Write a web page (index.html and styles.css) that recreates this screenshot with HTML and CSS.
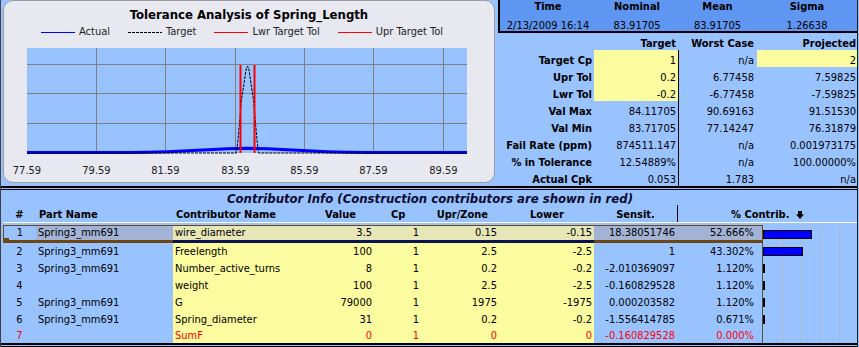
FILE: index.html
```html
<!DOCTYPE html>
<html>
<head>
  <title>Tolerance Analysis of Spring_Length</title>
  <meta charset="UTF-8">
  <link rel="stylesheet" href="styles.css">
</head>
<body>
  <div class="sheet">
    <div class="top">
      <div class="chart-panel">
        <div class="chart-title">Tolerance Analysis of Spring_Length</div>
        <div class="legend">
          <span class="legend-item"><span class="swatch swatch-actual"></span>Actual</span>
          <span class="legend-item"><span class="swatch swatch-target"></span>Target</span>
          <span class="legend-item"><span class="swatch swatch-tol"></span>Lwr Target Tol</span>
          <span class="legend-item"><span class="swatch swatch-tol"></span>Upr Target Tol</span>
        </div>
        <svg class="plot" width="490" height="143" viewBox="0 0 490 143">
          <rect x="23" y="9" width="440" height="105" fill="#99c3ff"/>
          <g stroke="#808080" stroke-width="1" fill="none">
            <path d="M23 25.5H463M23 54.5H463M23 84.5H463"/>
            <path d="M92.5 9V114M161.5 9V114M231.5 9V114M300.5 9V114M369.5 9V114M439.5 9V114"/>
          </g>
          <polyline fill="none" stroke="#0000ff" stroke-width="3" stroke-linejoin="round"
            points="23,113.5 103.5,113.5 123.5,113.4 143.5,113.2 163.5,112.7 183.5,111.8 203.5,110.7 223.5,109.7 243.5,109.3 263.5,109.7 283.5,110.7 303.5,111.8 323.5,112.7 343.5,113.2 363.5,113.4 383.5,113.5 463,113.5"/>
          <polyline fill="none" stroke="#000" stroke-width="1" stroke-dasharray="3 1"
            points="23,114 232.5,114 234,101 235.5,84 237.5,61 240.5,41 242,31 243.5,27 245,31 246.5,41 249.5,61 251.5,84 253,101 254.5,114 463,114"/>
          <path d="M236.5 26V114M250.5 26V114" stroke="#ff0000" stroke-width="2"/>
          <g class="axis-labels" text-anchor="middle">
            <text x="23" y="135">77.59</text>
            <text x="92.5" y="135">79.59</text>
            <text x="161.5" y="135">81.59</text>
            <text x="231.5" y="135">83.59</text>
            <text x="300.5" y="135">85.59</text>
            <text x="369.5" y="135">87.59</text>
            <text x="439.5" y="135">89.59</text>
          </g>
        </svg>
      </div>

      <div class="stats">
        <div class="summary">
          <div class="summary-head">Time</div>
          <div class="summary-head">Nominal</div>
          <div class="summary-head">Mean</div>
          <div class="summary-head">Sigma</div>
          <div class="summary-val">2/13/2009 16:14</div>
          <div class="summary-val">83.91705</div>
          <div class="summary-val">83.91705</div>
          <div class="summary-val">1.26638</div>
        </div>
        <div class="stat-grid">
          <div class="stat-label"></div>
          <div class="stat-head col-t">Target</div>
          <div class="stat-head col-w">Worst Case</div>
          <div class="stat-head col-p">Projected</div>

          <div class="stat-label">Target Cp</div>
          <div class="col-t input">1</div>
          <div class="col-w line">n/a</div>
          <div class="col-p input">2</div>

          <div class="stat-label">Upr Tol</div>
          <div class="col-t input">0.2</div>
          <div class="col-w line">6.77458</div>
          <div class="col-p">7.59825</div>

          <div class="stat-label">Lwr Tol</div>
          <div class="col-t input">-0.2</div>
          <div class="col-w line">-6.77458</div>
          <div class="col-p">-7.59825</div>

          <div class="stat-label">Val Max</div>
          <div class="col-t">84.11705</div>
          <div class="col-w line">90.69163</div>
          <div class="col-p">91.51530</div>

          <div class="stat-label">Val Min</div>
          <div class="col-t">83.71705</div>
          <div class="col-w line">77.14247</div>
          <div class="col-p">76.31879</div>

          <div class="stat-label">Fail Rate (ppm)</div>
          <div class="col-t">874511.147</div>
          <div class="col-w line">n/a</div>
          <div class="col-p">0.001973175</div>

          <div class="stat-label">% in Tolerance</div>
          <div class="col-t">12.54889%</div>
          <div class="col-w line">n/a</div>
          <div class="col-p">100.00000%</div>

          <div class="stat-label">Actual Cpk</div>
          <div class="col-t">0.053</div>
          <div class="col-w line">1.783</div>
          <div class="col-p">n/a</div>
        </div>
      </div>
    </div>

    <div class="rule"></div>

    <div class="contrib">
      <div class="contrib-title">Contributor Info (Construction contributors are shown in red)</div>
      <div class="contrib-head">
        <div class="h-num">#</div>
        <div class="h-part">Part Name</div>
        <div class="h-name">Contributor Name</div>
        <div class="h-val">Value</div>
        <div class="h-cp">Cp</div>
        <div class="h-upr"><span>Upr/Zone</span></div>
        <div class="h-low">Lower</div>
        <div class="h-sens">Sensit.</div>
        <div class="h-pct">% Contrib.
          <svg class="sort-arrow" width="8" height="8" viewBox="0 0 8 8"><path d="M2 0H6V3.5H8L4 8L0 3.5H2Z" fill="#000"/></svg>
        </div>
      </div>
      <div class="contrib-line"></div>

      <div class="crow sel">
        <div class="c-num">1</div>
        <div class="c-part">Spring3_mm691</div>
        <div class="c-name">wire_diameter</div>
        <div class="c-val">3.5</div>
        <div class="c-cp">1</div>
        <div class="c-upr">0.15</div>
        <div class="c-low">-0.15</div>
        <div class="c-sens">18.38051746</div>
        <div class="c-pct">52.666%</div>
        <div class="c-bar"><div class="bar" style="width: 49px"></div></div>
        <span class="handle"></span>
      </div>
      <div class="crow">
        <div class="c-num">2</div>
        <div class="c-part">Spring3_mm691</div>
        <div class="c-name">Freelength</div>
        <div class="c-val">100</div>
        <div class="c-cp">1</div>
        <div class="c-upr">2.5</div>
        <div class="c-low">-2.5</div>
        <div class="c-sens">1</div>
        <div class="c-pct">43.302%</div>
        <div class="c-bar"><div class="bar" style="width: 40px"></div></div>
      </div>
      <div class="crow">
        <div class="c-num">3</div>
        <div class="c-part">Spring3_mm691</div>
        <div class="c-name">Number_active_turns</div>
        <div class="c-val">8</div>
        <div class="c-cp">1</div>
        <div class="c-upr">0.2</div>
        <div class="c-low">-0.2</div>
        <div class="c-sens">-2.010369097</div>
        <div class="c-pct">1.120%</div>
        <div class="c-bar"><div class="bar" style="width: 2px"></div></div>
      </div>
      <div class="crow">
        <div class="c-num">4</div>
        <div class="c-part"></div>
        <div class="c-name">weight</div>
        <div class="c-val">100</div>
        <div class="c-cp">1</div>
        <div class="c-upr">2.5</div>
        <div class="c-low">-2.5</div>
        <div class="c-sens">-0.160829528</div>
        <div class="c-pct">1.120%</div>
        <div class="c-bar"><div class="bar" style="width: 2px"></div></div>
      </div>
      <div class="crow">
        <div class="c-num">5</div>
        <div class="c-part">Spring3_mm691</div>
        <div class="c-name">G</div>
        <div class="c-val">79000</div>
        <div class="c-cp">1</div>
        <div class="c-upr">1975</div>
        <div class="c-low">-1975</div>
        <div class="c-sens">0.000203582</div>
        <div class="c-pct">1.120%</div>
        <div class="c-bar"><div class="bar" style="width: 2px"></div></div>
      </div>
      <div class="crow">
        <div class="c-num">6</div>
        <div class="c-part">Spring3_mm691</div>
        <div class="c-name">Spring_diameter</div>
        <div class="c-val">31</div>
        <div class="c-cp">1</div>
        <div class="c-upr">0.2</div>
        <div class="c-low">-0.2</div>
        <div class="c-sens">-1.556414785</div>
        <div class="c-pct">0.671%</div>
        <div class="c-bar"><div class="bar" style="width: 2px"></div></div>
      </div>
      <div class="crow construction last">
        <div class="c-num">7</div>
        <div class="c-part"></div>
        <div class="c-name">SumF</div>
        <div class="c-val">0</div>
        <div class="c-cp">1</div>
        <div class="c-upr">0</div>
        <div class="c-low">0</div>
        <div class="c-sens">-0.160829528</div>
        <div class="c-pct">0.000%</div>
        <div class="c-bar"></div>
      </div>
    </div>

    <div class="rule"></div>
  </div>
</body>
</html>
```

FILE: styles.css
```css
* {
  margin: 0;
  padding: 0;
  box-sizing: border-box;
}

body {
  background: #99c3ff;
  font-family: "DejaVu Sans Condensed", "DejaVu Sans", sans-serif;
  font-size: 11px;
  color: #000;
}

.sheet {
  width: 858px;
  height: 347px;
  border-left: 1px solid #404040;
  border-right: 1px solid #1a1a1a;
  overflow: hidden;
}

/* top half: chart + summary numbers */

.top {
  display: flex;
  height: 186px;
}

.chart-panel {
  margin-left: 2px;
  width: 492px;
  height: 183px;
  background: #e8e8f0;
  border: 1px solid #9c9ca4;
  border-radius: 10px;
}

.chart-title {
  height: 24px;
  padding-top: 6px;
  line-height: 16px;
  text-align: center;
  font-size: 13px;
  font-weight: bold;
}

.legend {
  display: flex;
  gap: 18px;
  height: 14px;
  line-height: 14px;
  padding-left: 37px;
  color: #1c1c1c;
}

.legend-item {
  display: flex;
  align-items: center;
  gap: 4px;
  white-space: nowrap;
}

.swatch {
  width: 34px;
  height: 1px;
}

.swatch-actual {
  background: #0000ff;
}

.swatch-target {
  background: repeating-linear-gradient(90deg, #000 0 3px, transparent 3px 4px);
}

.swatch-tol {
  background: #ff0000;
}

.plot {
  display: block;
}

.axis-labels {
  font-size: 11px;
  fill: #1a1a1a;
}

.stats {
  margin-left: 3px;
  width: 359px;
}

.summary {
  display: grid;
  grid-template-columns: 96px 82px 79px 100px;
  grid-template-rows: 18px 13px;
  background: #5f96f2;
  border-left: 2px solid #000;
  border-bottom: 2px solid #000;
  text-align: center;
  white-space: nowrap;
}

.summary-head {
  font-weight: bold;
  line-height: 14px;
}

.summary-val {
  line-height: 16px;
}

.stat-grid {
  display: grid;
  grid-template-columns: 96px 84px 79px 100px;
  grid-auto-rows: 17px;
}

.stat-grid > div {
  line-height: 17px;
  padding-top: 2px;
  text-align: right;
  white-space: nowrap;
}

.stat-label,
.stat-head {
  font-weight: bold;
}

.stat-grid .stat-label {
  padding-right: 2px;
}

.stat-grid .col-t {
  padding-right: 2px;
}

.stat-grid .col-w {
  padding-right: 3px;
}

.stat-grid .col-p {
  padding-right: 1px;
}

.stat-grid .line {
  border-left: 1px solid #000;
}

.input {
  background: #fbfb9f;
}

/* double rules between sections */

.rule {
  height: 4px;
  border-top: 2px solid #000;
  border-bottom: 1px solid #000;
}

/* contributor table */

.contrib {
  padding-left: 2px;
}

.contrib-title {
  height: 17px;
  line-height: 17px;
  text-align: center;
  font-size: 13px;
  font-weight: bold;
  font-style: italic;
  color: #0b0b30;
}

.contrib-head,
.crow {
  display: grid;
  grid-template-columns: 33px 137px 139px 63px 82px 43px 94px 84px 85px 94px;
  white-space: nowrap;
}

.contrib-head {
  height: 15px;
  line-height: 15px;
  font-weight: bold;
}

.h-num {
  text-align: center;
}

.h-part,
.h-name {
  padding-left: 3px;
}

.h-val {
  text-align: right;
  padding-right: 19px;
}

.h-cp {
  padding-left: 16px;
}

.h-upr {
  display: flex;
  justify-content: flex-end;
  padding-right: 12px;
}

.h-low {
  padding-left: 30px;
}

.h-sens {
  text-align: center;
  border-right: 1px solid #000;
  margin-top: -2px;
  padding-top: 2px;
  height: 17px;
}

.h-pct {
  grid-column: span 2;
  text-align: center;
}

.sort-arrow {
  margin-left: 3px;
  vertical-align: -1px;
}

.contrib-line {
  height: 1px;
  margin-bottom: 2px;
  background: #fff;
}

.crow {
  height: 17px;
  line-height: 17px;
}

.c-num {
  text-align: center;
}

.c-part,
.c-name {
  padding-left: 2px;
}

.c-val,
.c-upr,
.c-sens {
  text-align: right;
  padding-right: 3px;
}

.c-cp {
  text-align: center;
}

.c-low {
  text-align: right;
  padding-right: 2px;
}

.c-pct {
  text-align: right;
  padding-right: 8px;
  border-right: 1px solid #505050;
}

.c-name,
.c-val,
.c-cp,
.c-upr,
.c-low {
  background: #fbfb9f;
}

.c-bar {
  background: repeating-linear-gradient(90deg, transparent 0 18px, #aab8d4 18px 19px);
  background-position: 1px 0;
}

.bar {
  height: 9px;
  margin-top: 4px;
  background: #0000ff;
  border: 1px solid #000;
}

/* selected row */

.crow.sel {
  position: relative;
  height: 18px;
  line-height: 14px;
}

.crow.sel > div {
  border-top: 1px solid #6e4614;
  border-bottom: 3px solid #6e4614;
}

.crow.sel > .c-bar {
  border: none;
}

.crow.sel .bar {
  margin-top: 5px;
}

.crow.sel .c-num {
  border-left: 1px solid #6e4614;
}

.crow.sel .c-part,
.crow.sel .c-sens,
.crow.sel .c-pct {
  background: #a3b3d6;
}

.crow.sel .c-pct {
  border-right-color: #6e4614;
}

.crow.sel .c-name,
.crow.sel .c-val,
.crow.sel .c-cp,
.crow.sel .c-upr,
.crow.sel .c-low {
  background: #e6e6b6;
  border-bottom-color: #0c1450;
}

.handle {
  position: absolute;
  left: 1px;
  bottom: 0;
  width: 5px;
  height: 5px;
  background: #6e4614;
}

.crow.last {
  height: 15px;
  line-height: 15px;
}

.construction {
  color: #ff0000;
}
```
